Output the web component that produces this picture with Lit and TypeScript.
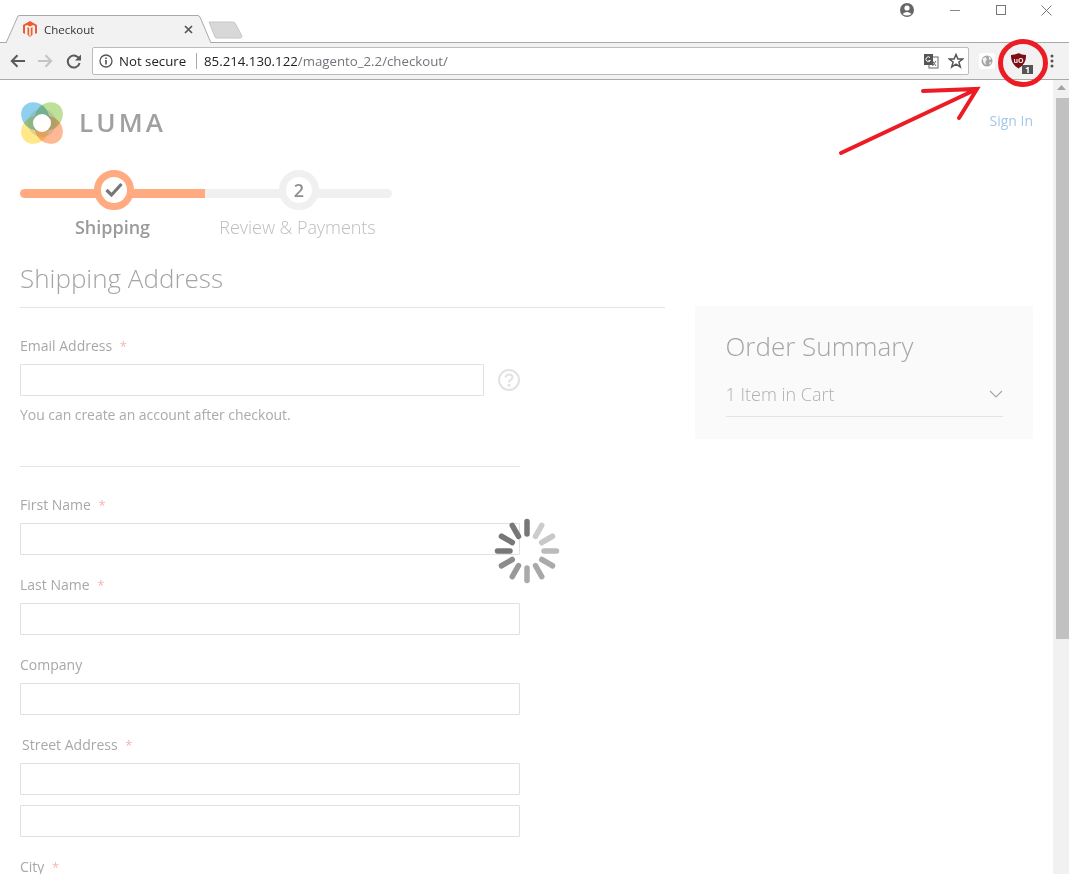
import { LitElement, html, css, svg } from "lit";
import { customElement } from "lit/decorators.js";

const spokeColors = ["#777","#ccc","#c8c8c8","#bbb","#aaa","#a8a8a8","#aaa","#999","#8c8c8c","#777","#777","#777"];

@customElement("app-root")
export class AppRoot extends LitElement {
  static styles = css`
    :host { display: block; width: 1069px; height: 874px; overflow: hidden; position: relative; background: #fff; font-family: "Open Sans", "Noto Sans", sans-serif; }
    .titlebar { height: 42px; display: flex; align-items: flex-end; position: relative; }
    .tab { width: 218px; height: 28px; margin-left: 6px; position: relative; display: flex; align-items: center; margin-bottom: -1px; }
    .tab-shape { position: absolute; left: 0; top: 0; }
    .favicon { position: relative; margin-left: 17px; }
    .tab-title { position: relative; margin-left: 7px; font-size: 11.5px; color: #333; flex: 1; }
    .tab-close { position: relative; margin-right: 31px; }
    .newtab { margin-left: -16px; margin-bottom: 3px; }
    .winctl { position: absolute; right: 0; top: 0; display: flex; align-items: center; height: 20px; }
    .w-profile { margin-right: 35px; }
    .w-min { margin-right: 35px; }
    .w-max { margin-right: 34px; }
    .w-close { margin-right: 17px; }
    .toolbar { height: 36px; background: #f2f2f2; border-top: 1px solid #a9a9a9; border-bottom: 1px solid #a9a9a9; display: flex; align-items: center; }
    .nav { display: flex; align-items: center; margin-left: 10px; gap: 9px; }
    .n-fwd { margin-left: 2px; }
    .n-reload { margin-left: 4px; }
    .omnibox { margin-left: 10px; width: 875px; height: 26px; background: #fff; border: 1px solid #bcbcbc; border-radius: 2px; display: flex; align-items: center; }
    .info { margin-left: 6px; }
    .secure { margin-left: 6px; font-size: 13.25px; color: #222; width: 77px; border-right: 1px solid #aaa; line-height: 16px; }
    .url { margin-left: 7px; font-size: 13.25px; color: #222; flex: 1; }
    .url span { color: #70757a; }
    .omni-icons { display: flex; align-items: center; gap: 9px; margin-right: 4px; }
    .exts { display: flex; align-items: center; margin-left: 10px; }
    .globe { width: 16px; height: 16px; background: #fff; border-radius: 3px; display: flex; align-items: center; justify-content: center; }
    .ublock { margin-left: 16px; }
    .ub-letters { font: 700 7px "Open Sans", sans-serif; fill: #f4e6e6; }
    .ub-count { font: 700 9px "Open Sans", sans-serif; fill: #fff; }
    .dots { margin-left: 15px; }
    .viewport { display: flex; height: 794px; overflow: hidden; }
    .page { flex: 1; padding: 20px 20px 0; position: relative; min-width: 0; }
    .scrollbar { width: 16px; background: #f1f1f1; display: flex; flex-direction: column; align-items: center; }
    .sb-up { margin-top: 5px; }
    .sb-thumb { width: 13px; height: 541px; margin-top: 8px; margin-left: 2px; background: #c1c1c1; }
    .header { display: flex; justify-content: space-between; height: 45px; }
    .logo { display: flex; align-items: center; }
    .petal { mix-blend-mode: multiply; }
    .wordmark { font-size: 26px; font-weight: 600; color: #a0a0a0; letter-spacing: 3.1px; margin-left: 15px; line-height: 45px; }
    .signin { font-size: 14px; color: #a4c8e6; line-height: 20px; margin-top: 11px; }
    .progress { display: flex; margin-top: 44px; }
    .step { position: relative; text-align: center; }
    .step.done { width: 185px; }
    .step.todo { width: 187px; }
    .track { height: 9px; background: #f0f0f0; }
    .step.done .track { background: #ffaa80; border-radius: 5px 0 0 5px; }
    .step.todo .track { border-radius: 0 5px 5px 0; }
    .bubble { position: absolute; left: 74px; top: -19px; width: 40px; height: 40px; box-sizing: border-box; border-radius: 50%; background: #fff; display: flex; align-items: center; justify-content: center; }
    .step.done .bubble { border: 7px solid #ffaa80; }
    .step.todo .bubble { border: 7px solid #f0f0f0; font-size: 18px; font-weight: 600; color: #8f8f8f; }
    .step-label { font-size: 18px; line-height: 24px; margin-top: 17px; }
    .step.done .step-label { font-weight: 600; color: #9a9a9a; }
    .step.todo .step-label { font-weight: 300; color: #bdbdbd; letter-spacing: -0.05px; padding-right: 2px; }
    .main { display: grid; grid-template-columns: 645px 338px; column-gap: 30px; margin-top: 23px; align-items: start; }
    h1 { margin: 0; font-size: 26px; font-weight: 300; line-height: 32px; color: #a5a5a5; padding-bottom: 13px; border-bottom: 1px solid #e4e4e4; }
    .form { width: 500px; margin-top: 28px; }
    .field { margin-bottom: 20px; }
    label { display: block; font-size: 14px; line-height: 20px; color: #a8a8a8; margin-bottom: 8px; }
    label.ind { margin-left: 2px; }
    label.last { line-height: 16px; padding-top: 2px; margin-bottom: 0; }
    label b { font-weight: 400; color: #f6b3b3; margin-left: 4px; font-size: 13px; }
    .inp { height: 32px; box-sizing: border-box; border: 1px solid #e0e0e0; background: #fff; border-radius: 1px; }
    .inp + .inp { margin-top: 10px; }
    .email-row { display: flex; align-items: center; }
    .email-row .inp { width: 464px; }
    .help { margin-left: 14px; }
    .note { font-size: 14px; line-height: 20px; color: #ababab; margin-top: 9px; letter-spacing: -0.05px; }
    hr { margin: 41px 0 28px; border: 0; border-top: 1px solid #e4e4e4; }
    .summary { background: #fafafa; margin-top: 44px; padding: 23px 30px 0 31px; height: 133px; box-sizing: border-box; }
    .summary h2 { margin: 0 0 0 -0.5px; font-size: 26px; font-weight: 300; line-height: 34px; color: #a5a5a5; }
    .cart { display: flex; justify-content: space-between; align-items: center; margin-top: 18px; padding-bottom: 9px; border-bottom: 1px solid #e4e4e4; font-size: 18px; font-weight: 300; line-height: 26px; color: #b0b0b0; }
    .cart span { margin-left: -0.5px; }
    .overlay { position: absolute; inset: 0; pointer-events: none; }
    .spinner { position: absolute; left: 491px; top: 515px; }
  `;

  private spinner() {
    return html`<svg class="spinner" width="72" height="72" viewBox="-36 -36 72 72">
      ${spokeColors.map((c, i) => svg`<line x1="0" y1="-17" x2="0" y2="-29.500" stroke=${c} stroke-width="5.500" stroke-linecap="round" transform=${`rotate(${i * 30})`}/>`)}
    </svg>`;
  }

  render() {
    return html`
      <div class="titlebar">
        <div class="tab">
          <svg class="tab-shape" width="206" height="28" viewBox="0 0 206 28"><path d="M0 28 L12 1 Q12.5 .5 14 .5 L192 .5 Q193 .5 194 2 L205 28" fill="#f2f2f2" stroke="#a9a9a9"/></svg>
          <svg class="favicon" width="14" height="16" viewBox="0 0 14 16"><path d="M7 0 L14 4 V12 L12 13 V5 L10 3.900 L7 5.600 L4 3.900 L2 5 V13 L0 12 V4 Z M4.500 6 L6.200 7 V14.500 L7 15 L7.800 14.500 V7 L9.500 6 V13.800 L7 16 L4.500 13.800 Z" fill="#ee5b2c"/></svg>
          <span class="tab-title">Checkout</span>
          <svg class="tab-close" width="9" height="9" viewBox="0 0 9 9"><path d="M1 1L8 8M8 1L1 8" stroke="#555" stroke-width="1.700"/></svg>
        </div>
        <svg class="newtab" width="36" height="18" viewBox="0 0 36 18"><path d="M1 1 H25 Q26 1 27 2 L34 15 Q34 17 32 17 H9 Q8 17 7 16 Z" fill="#d8d8d8" stroke="#c6c6c6"/></svg>
        <div class="winctl">
          <svg class="w-profile" width="16" height="16" viewBox="0 0 16 16"><circle cx="8" cy="8" r="7" fill="#666"/><circle cx="8" cy="6" r="2.600" fill="#fff"/><path d="M3.500 12 Q8 8 12.500 12 Q8 15 3.500 12Z" fill="#fff"/></svg>
          <svg class="w-min" width="11" height="11" viewBox="0 0 11 11"><path d="M0 5.500H10" stroke="#888"/></svg>
          <svg class="w-max" width="11" height="11" viewBox="0 0 11 11"><rect x=".5" y=".5" width="9" height="9" fill="none" stroke="#777"/></svg>
          <svg class="w-close" width="11" height="11" viewBox="0 0 11 11"><path d="M.5 .5L10.500 10.500M10.500 .5L.5 10.500" stroke="#777"/></svg>
        </div>
      </div>
      <div class="toolbar">
        <div class="nav">
          <svg width="16" height="14" viewBox="0 0 16 14"><path d="M15 7H2M7.500 1.200L1.800 7L7.500 12.800" fill="none" stroke="#5a5a5a" stroke-width="2"/></svg>
          <svg class="n-fwd" width="16" height="14" viewBox="0 0 16 14"><path d="M1 7H14M8.500 1.200L14.200 7L8.500 12.800" fill="none" stroke="#c4c4c4" stroke-width="2"/></svg>
          <svg class="n-reload" width="16" height="16" viewBox="0 0 16 16"><path d="M13.400 6.500 A6 6 0 1 0 13.600 10" fill="none" stroke="#5a5a5a" stroke-width="2"/><path d="M15 1.500V7.500H9Z" fill="#5a5a5a"/></svg>
        </div>
        <div class="omnibox">
          <svg class="info" width="14" height="14" viewBox="0 0 14 14"><circle cx="7" cy="7" r="6" fill="none" stroke="#555" stroke-width="1.300"/><rect x="6.200" y="6" width="1.600" height="4.500" fill="#555"/><rect x="6.200" y="3.500" width="1.600" height="1.600" fill="#555"/></svg>
          <span class="secure">Not secure</span>
          <span class="url">85.214.130.122<span>/magento_2.2/checkout/</span></span>
          <div class="omni-icons">
            <svg width="16" height="16" viewBox="0 0 16 16"><rect x="6" y="4" width="9" height="11" fill="#fff" stroke="#666"/><rect x="1" y="1" width="9" height="11" fill="#555"/><path d="M7 4.500 A2.400 2.400 0 1 0 7.400 7.500 H5.500" fill="none" stroke="#fff"/><path d="M9.500 8L13 13M13 8L9.500 13" stroke="#666"/></svg>
            <svg width="16" height="16" viewBox="0 0 16 16"><path d="M8 1.500L9.900 6H14.700L10.900 9L12.300 14L8 11.200L3.700 14L5.100 9L1.300 6H6.100Z" fill="none" stroke="#555" stroke-width="1.500"/></svg>
          </div>
        </div>
        <div class="exts">
          <div class="globe"><svg width="12" height="12" viewBox="0 0 12 12"><circle cx="6" cy="6" r="5.500" fill="#a5a5a5"/><path d="M1.500 3.500L4.500 2L6 4.500L4.500 6.500L5 10L2.500 7.500Z M7.500 1L10.500 3.500L8.500 5.500Z M8 7.500L10.500 7L9 10Z" fill="#f2f2f2"/></svg></div>
          <svg class="ublock" width="24" height="30" viewBox="0 -2 24 30">
            <path d="M7.500 5 Q10.500 7 15 7 Q15.500 16 7.500 20.500 Q-.5 16 0 7 Q4.500 7 7.500 5Z" fill="#7d0f12"/>
            <text class="ub-letters" x="7.500" y="14.500" text-anchor="middle">uO</text>
            <rect x="11" y="17" width="11" height="9" fill="#555"/>
            <text class="ub-count" x="16.500" y="25" text-anchor="middle">1</text>
          </svg>
          <svg class="dots" width="4" height="14" viewBox="0 0 4 14"><circle cx="2" cy="2" r="1.500" fill="#555"/><circle cx="2" cy="7" r="1.500" fill="#555"/><circle cx="2" cy="12" r="1.500" fill="#555"/></svg>
        </div>
      </div>
      <div class="viewport">
        <div class="page">
          <div class="header">
            <div class="logo">
              <svg width="44" height="45" viewBox="0 0 44 45">
                <ellipse class="petal" cx="15.200" cy="16.200" rx="15" ry="13" transform="rotate(45 15.200 16.200)" fill="#8fd0f0"/>
                <ellipse class="petal" cx="28.800" cy="16.200" rx="15" ry="13" transform="rotate(-45 28.800 16.200)" fill="#bfe09a"/>
                <ellipse class="petal" cx="15.200" cy="29.800" rx="15" ry="13" transform="rotate(-45 15.200 29.800)" fill="#ffe88a"/>
                <ellipse class="petal" cx="28.800" cy="29.800" rx="15" ry="13" transform="rotate(45 28.800 29.800)" fill="#ffb894"/>
                <circle cx="22" cy="23" r="14" fill="#8f9a90" fill-opacity=".3"/>
                <circle cx="22" cy="23" r="9" fill="#fff"/>
              </svg>
              <span class="wordmark">LUMA</span>
            </div>
            <span class="signin">Sign In</span>
          </div>
          <div class="progress">
            <div class="step done">
              <div class="track"></div>
              <div class="bubble"><svg width="20" height="16" viewBox="0 0 20 16"><path d="M2.500 8L7.500 13L17.500 2" fill="none" stroke="#777" stroke-width="3.200"/></svg></div>
              <div class="step-label">Shipping</div>
            </div>
            <div class="step todo">
              <div class="track"></div>
              <div class="bubble">2</div>
              <div class="step-label">Review &amp; Payments</div>
            </div>
          </div>
          <div class="main">
            <div>
              <h1>Shipping Address</h1>
              <div class="form">
                <label>Email Address <b>*</b></label>
                <div class="email-row">
                  <div class="inp"></div>
                  <svg class="help" width="22" height="22" viewBox="0 0 22 22"><circle cx="11" cy="11" r="10" fill="none" stroke="#e2e2e2" stroke-width="2"/><path d="M7.500 8.500 Q8 5.500 11 5.500 Q14.500 5.500 14.500 8.300 Q14.500 10 12.500 11 Q11 11.800 11 13.500" fill="none" stroke="#e2e2e2" stroke-width="2.200"/><rect x="9.700" y="15" width="2.600" height="2.600" fill="#e2e2e2"/></svg>
                </div>
                <div class="note">You can create an account after checkout.</div>
                <hr />
                <div class="field"><label>First Name <b>*</b></label><div class="inp"></div></div>
                <div class="field"><label>Last Name <b>*</b></label><div class="inp"></div></div>
                <div class="field"><label>Company</label><div class="inp"></div></div>
                <div class="field"><label class="ind">Street Address <b>*</b></label><div class="inp"></div><div class="inp"></div></div>
                <label class="last">City <b>*</b></label>
              </div>
            </div>
            <aside class="summary">
              <h2>Order Summary</h2>
              <div class="cart"><span>1 Item in Cart</span><svg width="14" height="8" viewBox="0 0 14 8"><path d="M1 1L7 7L13 1" fill="none" stroke="#a8a8a8" stroke-width="1.200"/></svg></div>
            </aside>
          </div>
        </div>
        <div class="scrollbar">
          <svg class="sb-up" width="9" height="5" viewBox="0 0 9 5"><path d="M4.500 0L9 5H0Z" fill="#a3a3a3"/></svg>
          <div class="sb-thumb"></div>
        </div>
      </div>
      ${this.spinner()}
      <svg class="overlay" width="1069" height="874" viewBox="0 0 1069 874">
        <g fill="none" stroke="#ed1c24" stroke-linecap="round">
          <path d="M841 153L977 89M923 91L977 89L959 118" stroke-width="4"/>
          <ellipse cx="1023" cy="63" rx="22.500" ry="21.500" stroke-width="5"/>
        </g>
      </svg>
    `;
  }
}
